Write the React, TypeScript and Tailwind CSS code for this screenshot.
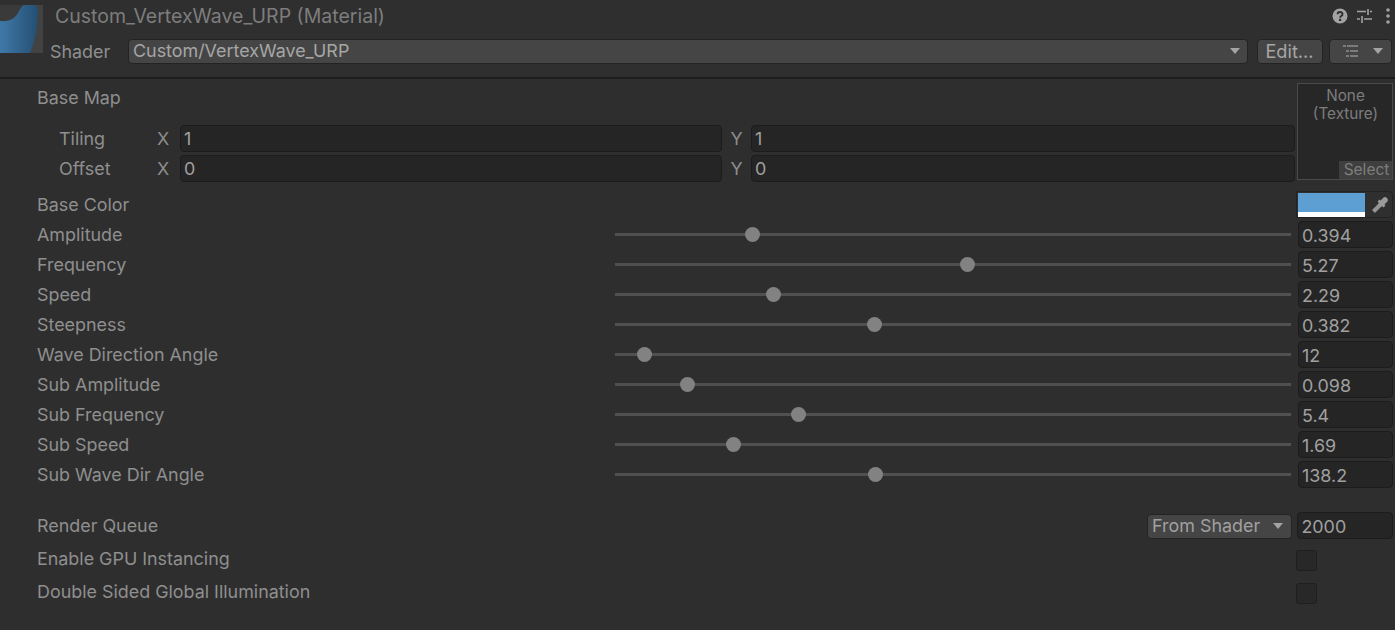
const sliders = [
  { label: "Amplitude", thumb: 137, value: "0.394" },
  { label: "Frequency", thumb: 352, value: "5.27" },
  { label: "Speed", thumb: 158, value: "2.29" },
  { label: "Steepness", thumb: 259, value: "0.382" },
  { label: "Wave Direction Angle", thumb: 29, value: "12" },
  { label: "Sub Amplitude", thumb: 72, value: "0.098" },
  { label: "Sub Frequency", thumb: 183, value: "5.4" },
  { label: "Sub Speed", thumb: 118, value: "1.69" },
  { label: "Sub Wave Dir Angle", thumb: 260, value: "138.2" },
];

function Caret() {
  return (
    <svg width="12" height="8" viewBox="0 0 12 8" className="shrink-0">
      <path d="M1 1h10L6 7z" fill="#a3a3a3" />
    </svg>
  );
}

function Field({ value, className }: { value: string; className: string }) {
  return (
    <div
      className={`flex items-center self-start mt-[1px] h-[27px] pl-[3px] rounded-[4px] bg-[#252525] border border-[#1c1c1c] text-[#a0a0a0] ${className}`}
    >
      {value}
    </div>
  );
}

function VectorRow({ label, x, y }: { label: string; x: string; y: string }) {
  return (
    <div className="flex items-center h-[30px]">
      <span className="w-[120px] pl-[22px]">{label}</span>
      <span className="w-[23px] text-[#8c8c8c]">X</span>
      <Field value={x} className="w-[542px] pt-[1px]" />
      <span className="w-[29px] text-center text-[#8c8c8c]">Y</span>
      <Field value={y} className="w-[544px] pt-[1px]" />
    </div>
  );
}

function SliderRow({ label, thumb, value }: { label: string; thumb: number; value: string }) {
  return (
    <div className="flex items-center h-[30px]">
      <span className="w-[578px] shrink-0">{label}</span>
      <div className="relative w-[676px] h-[3px] mb-[2px] bg-[#505050]">
        <div
          className="absolute top-[-6px] w-[15px] h-[15px] -ml-[7px] rounded-full bg-[#828282]"
          style={{ left: thumb }}
        />
      </div>
      <Field value={value} className="ml-[7px] w-[95px] pt-[2px]" />
    </div>
  );
}

export default function App() {
  return (
    <div className="w-[1395px] h-[630px] overflow-hidden bg-[#2e2e2e] text-[17.9px] leading-[24px] text-[#8f8f8f] font-['Inter',sans-serif]">
      <header className="relative h-[79px] border-b-2 border-[#1d1d1d] bg-[#2f2f2f]">
        <div className="absolute left-0 top-[5px] w-[43px] h-[48px] bg-[#424242] overflow-hidden">
          <svg width="43" height="48" viewBox="0 0 43 48">
            <defs>
              <linearGradient id="mat" x1="0" x2="1" y1="0" y2="0">
                <stop offset="0" stopColor="#3f79a8" />
                <stop offset="1" stopColor="#244f73" />
              </linearGradient>
            </defs>
            <path d="M0 0h22v16H0z" fill="#3a3a3a" />
            <path
              d="M0 16c10 1 16-3 19-10 2-4 4-6 6-6h9c3 0 4 3 4 6 0 15-3 30-8 42H0z"
              fill="url(#mat)"
            />
          </svg>
        </div>
        <div className="flex items-center justify-between h-[32px] pl-[55px] pr-[3px]">
          <span className="text-[19.5px] text-[#7d7d7d]">Custom_VertexWave_URP (Material)</span>
          <div className="flex items-center">
            <svg width="16" height="16" viewBox="0 0 16 16">
              <circle cx="8" cy="8" r="7.5" fill="#a3a3a3" />
              <path
                d="M5.6 6.2c0-3 4.900-3 4.900 0 0 1.900-2.400 1.800-2.400 3.500"
                fill="none"
                stroke="#2f2f2f"
                strokeWidth="1.900"
              />
              <rect x="7" y="10.800" width="2.200" height="2.200" fill="#2f2f2f" />
            </svg>
            <svg width="16" height="16" viewBox="0 0 16 16" className="ml-[9px]">
              <path
                d="M0 3.500h9M13 3.500h2M11 1v6M0 11h3M7 11h8M5 8v7"
                fill="none"
                stroke="#a3a3a3"
                strokeWidth="1.600"
              />
            </svg>
            <svg width="8" height="16" viewBox="0 0 8 16" className="ml-[11px]">
              <circle cx="4" cy="2" r="1.800" fill="#a3a3a3" />
              <circle cx="4" cy="8" r="1.800" fill="#a3a3a3" />
              <circle cx="4" cy="14" r="1.800" fill="#a3a3a3" />
            </svg>
          </div>
        </div>
        <div className="flex items-center h-[30px] mt-[4px] pl-[50px] pr-[3px]">
          <span className="w-[78px] pt-[1px]">Shader</span>
          <div className="flex items-center justify-between w-[1120px] h-[25px] pl-[4px] pr-[6px] rounded-[4px] bg-[#454545] border border-[#232323] text-[#a6a6a6]">
            <span>Custom/VertexWave_URP</span>
            <Caret />
          </div>
          <div className="flex items-center justify-center ml-[9px] w-[66px] h-[25px] pr-[1px] rounded-[4px] bg-[#454545] border border-[#232323] text-[18.2px] text-[#a6a6a6]">
            Edit...
          </div>
          <div className="flex items-center justify-between ml-[6px] w-[63px] h-[25px] pl-[13px] pr-[7px] rounded-[4px] bg-[#454545] border border-[#232323]">
            <svg width="16" height="12" viewBox="0 0 16 12">
              <path
                d="M0 1h3M4 1h11M3 6h3M7 6h8M3 11h3M7 11h8"
                fill="none"
                stroke="#8f8f8f"
                strokeWidth="1.300"
              />
            </svg>
            <Caret />
          </div>
        </div>
      </header>

      <main className="pl-[37px] pr-[2px]">
        <div className="flex">
          <div className="w-[1258px] shrink-0">
            <div className="h-[45px] pt-[6.5px]">Base Map</div>
            <VectorRow label="Tiling" x="1" y="1" />
            <VectorRow label="Offset" x="0" y="0" />
          </div>
          <div className="relative ml-[2px] mt-[4px] w-[97px] h-[97px] border border-[#4a4a4a] bg-[#272727] text-center text-[15.3px] leading-[18px] text-[#7d7d7d]">
            <div className="pt-[3px] pl-[1px]">None</div>
            <div className="pl-[1px]">(Texture)</div>
            <div className="absolute right-0 bottom-0 w-[53px] h-[18px] pl-[2px] bg-[#3f3f3f] text-[15.5px] leading-[18px]">
              Select
            </div>
          </div>
        </div>

        <div className="flex items-center h-[30px] mt-[6px]">
          <span className="w-[1259px] shrink-0">Base Color</span>
          <div className="flex items-start self-start mt-[1px] w-[97px] h-[27px] pl-[1px] pt-[1px] rounded-r-[4px] border border-[#222222] bg-[#2f2f2f]">
            <div className="w-[67px] h-[24px] border-b-[5px] border-white bg-[#5e9fd3]" />
            <svg width="16" height="16" viewBox="0 0 16 16" className="ml-[7px] mt-[4px]">
              <path d="M1.500 14.500 9 7" fill="none" stroke="#949494" strokeWidth="4" />
              <path d="M6.500 3.500 12.500 9.500" fill="none" stroke="#9a9a9a" strokeWidth="2.600" />
              <path d="M9.500 6.500 13 3" fill="none" stroke="#9a9a9a" strokeWidth="5.500" strokeLinecap="round" />
            </svg>
          </div>
        </div>

        {sliders.map((s) => (
          <SliderRow key={s.label} label={s.label} thumb={s.thumb} value={s.value} />
        ))}

        <div className="flex items-center h-[30px] mt-[21px]">
          <span className="w-[1110px] shrink-0">Render Queue</span>
          <div className="flex items-center justify-between w-[146px] h-[25px] pl-[4px] pr-[7px] rounded-[4px] bg-[#454545] border border-[#232323] text-[#a0a0a0]">
            <span>From Shader</span>
            <Caret />
          </div>
          <Field value="2000" className="ml-[5px] w-[96px] pt-[2px]" />
        </div>
        <div className="flex items-center justify-between h-[33px] mt-[2px]">
          <span className="mb-[2px]">Enable GPU Instancing</span>
          <div className="w-[21px] h-[21px] mt-[2px] mr-[76px] rounded-[3px] bg-[#282828] border border-[#1f1f1f]" />
        </div>
        <div className="flex items-center justify-between h-[33px]">
          <span className="mb-[2px]">Double Sided Global Illumination</span>
          <div className="w-[21px] h-[21px] mt-[2px] mr-[76px] rounded-[3px] bg-[#282828] border border-[#1f1f1f]" />
        </div>
      </main>
    </div>
  );
}
